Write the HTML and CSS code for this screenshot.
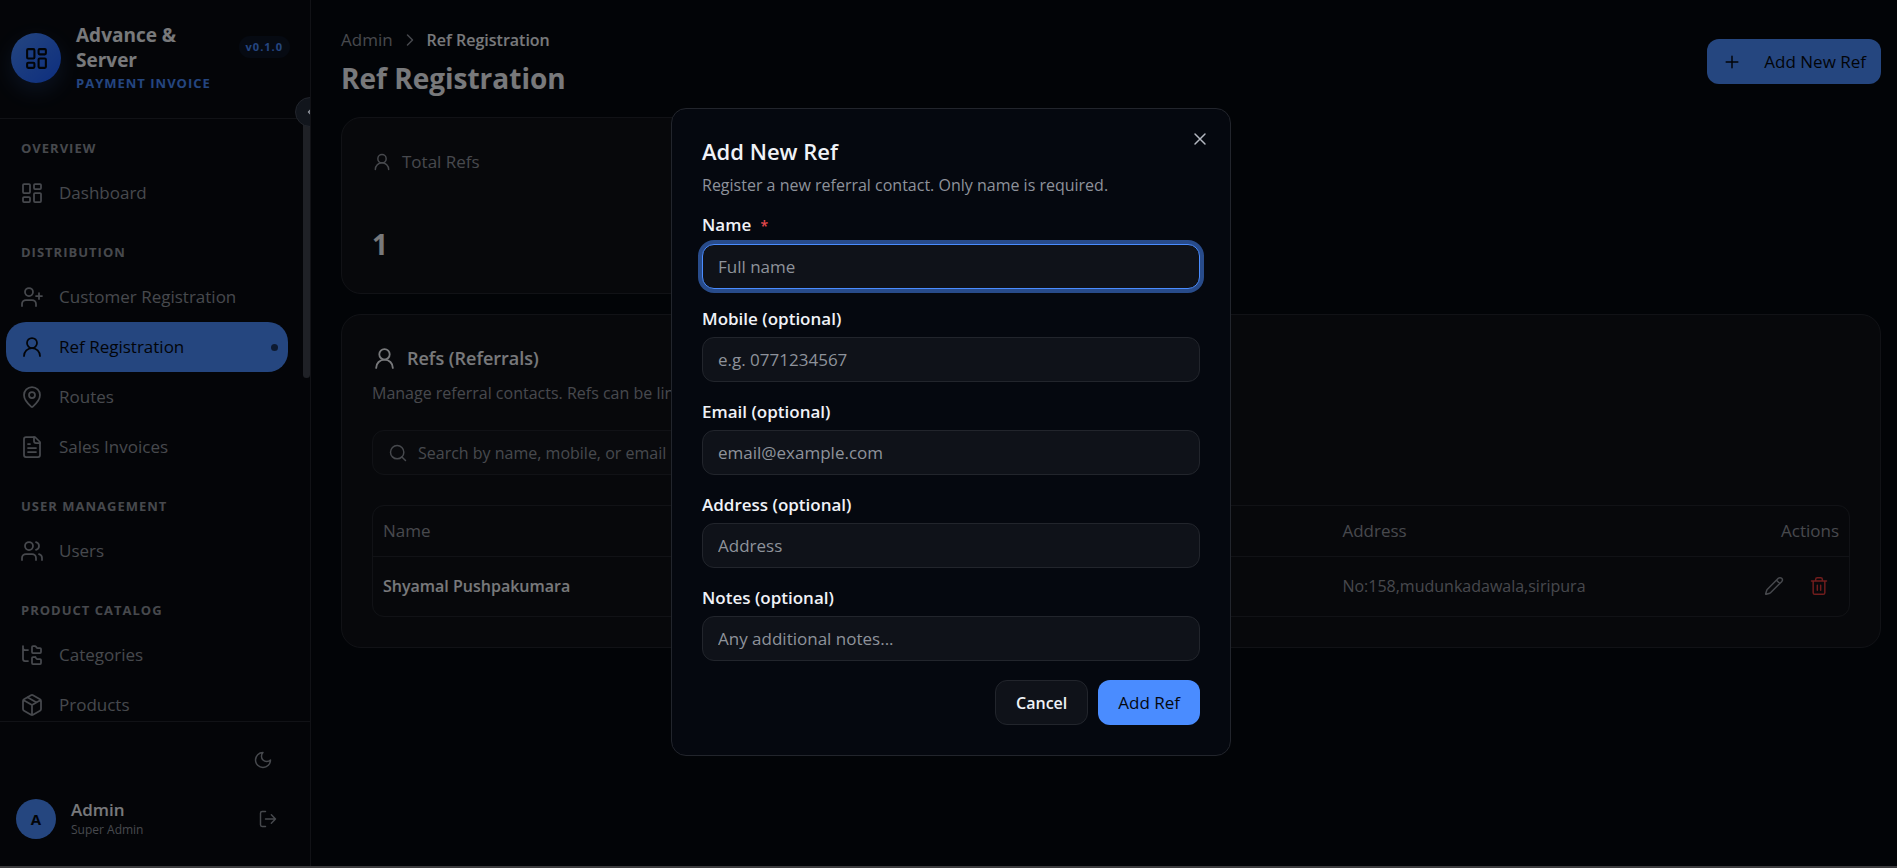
FILE: index.html
```html
<!DOCTYPE html>
<html lang="en">
<head>
<meta charset="utf-8">
<title>Ref Registration</title>
<link rel="stylesheet" href="styles.css">
</head>
<body>
<svg class="sprite" aria-hidden="true">
  <symbol id="i-dash" viewBox="0 0 24 24"><rect x="3" y="3" width="7" height="9" rx="1"/><rect x="14" y="3" width="7" height="5" rx="1"/><rect x="14" y="12" width="7" height="9" rx="1"/><rect x="3" y="16" width="7" height="5" rx="1"/></symbol>
  <symbol id="i-userplus" viewBox="0 0 24 24"><path d="M16 21v-2a4 4 0 0 0-4-4H6a4 4 0 0 0-4 4v2"/><circle cx="9" cy="7" r="4"/><path d="M19 8v6M22 11h-6"/></symbol>
  <symbol id="i-user" viewBox="0 0 24 24"><circle cx="12" cy="8" r="5"/><path d="M20 21a8 8 0 0 0-16 0"/></symbol>
  <symbol id="i-pin" viewBox="0 0 24 24"><path d="M20 10c0 4.993-5.539 10.193-7.399 11.799a1 1 0 0 1-1.202 0C9.539 20.193 4 14.993 4 10a8 8 0 0 1 16 0"/><circle cx="12" cy="10" r="3"/></symbol>
  <symbol id="i-file" viewBox="0 0 24 24"><path d="M15 2H6a2 2 0 0 0-2 2v16a2 2 0 0 0 2 2h12a2 2 0 0 0 2-2V7Z"/><path d="M14 2v4a2 2 0 0 0 2 2h4M10 9H8M16 13H8M16 17H8"/></symbol>
  <symbol id="i-users" viewBox="0 0 24 24"><path d="M16 21v-2a4 4 0 0 0-4-4H6a4 4 0 0 0-4 4v2"/><circle cx="9" cy="7" r="4"/><path d="M22 21v-2a4 4 0 0 0-3-3.870M16 3.130a4 4 0 0 1 0 7.750"/></symbol>
  <symbol id="i-tree" viewBox="0 0 24 24"><path d="M20 10a1 1 0 0 0 1-1V6a1 1 0 0 0-1-1h-2.500a1 1 0 0 1-.8-.4l-.9-1.200A1 1 0 0 0 15 3h-2a1 1 0 0 0-1 1v5a1 1 0 0 0 1 1Z"/><path d="M20 21a1 1 0 0 0 1-1v-3a1 1 0 0 0-1-1h-2.900a1 1 0 0 1-.88-.55l-.42-.85a1 1 0 0 0-.92-.6H13a1 1 0 0 0-1 1v5a1 1 0 0 0 1 1Z"/><path d="M3 5a2 2 0 0 0 2 2h3M3 3v13a2 2 0 0 0 2 2h3"/></symbol>
  <symbol id="i-box" viewBox="0 0 24 24"><path d="M11 21.730a2 2 0 0 0 2 0l7-4A2 2 0 0 0 21 16V8a2 2 0 0 0-1-1.730l-7-4a2 2 0 0 0-2 0l-7 4A2 2 0 0 0 3 8v8a2 2 0 0 0 1 1.730zM12 22V12M3.300 7l8.700 5 8.700-5M7.500 4.270l9 5.150"/></symbol>
  <symbol id="i-moon" viewBox="0 0 24 24"><path d="M12 3a6 6 0 0 0 9 9 9 9 0 1 1-9-9Z"/></symbol>
  <symbol id="i-out" viewBox="0 0 24 24"><path d="M9 21H5a2 2 0 0 1-2-2V5a2 2 0 0 1 2-2h4M16 17l5-5-5-5M21 12H9"/></symbol>
  <symbol id="i-right" viewBox="0 0 24 24"><path d="m9 18 6-6-6-6"/></symbol>
  <symbol id="i-left" viewBox="0 0 24 24"><path d="m15 18-6-6 6-6"/></symbol>
  <symbol id="i-plus" viewBox="0 0 24 24"><path d="M5 12h14M12 5v14"/></symbol>
  <symbol id="i-x" viewBox="0 0 24 24"><path d="M18 6 6 18M6 6l12 12"/></symbol>
  <symbol id="i-search" viewBox="0 0 24 24"><circle cx="11" cy="11" r="8"/><path d="m21 21-4.300-4.300"/></symbol>
  <symbol id="i-pen" viewBox="0 0 24 24"><path d="M21.174 6.812a1 1 0 0 0-3.986-3.987L3.842 16.174a2 2 0 0 0-.5.830l-1.321 4.352a.5.5 0 0 0 .623.622l4.353-1.320a2 2 0 0 0 .830-.497zM15 5l4 4"/></symbol>
  <symbol id="i-trash" viewBox="0 0 24 24"><path d="M3 6h18M19 6v14a2 2 0 0 1-2 2H7a2 2 0 0 1-2-2V6M8 6V4a2 2 0 0 1 2-2h4a2 2 0 0 1 2 2v2M10 11v6M14 11v6"/></symbol>
</svg>

<div class="app">
  <aside class="sidebar">
    <header class="brand">
      <span class="logo"><svg class="icon"><use href="#i-dash"/></svg></span>
      <div class="brand-text">
        <strong class="brand-name">Advance &amp; Server</strong>
        <span class="brand-sub">PAYMENT INVOICE</span>
      </div>
      <span class="version">v0.1.0</span>
      <button class="collapse" aria-label="Collapse sidebar"><svg class="icon"><use href="#i-left"/></svg></button>
    </header>
    <nav class="nav">
      <span class="thumb"></span>
      <section class="group">
        <h2 class="group-title">OVERVIEW</h2>
        <a class="item" href="#"><svg class="icon"><use href="#i-dash"/></svg>Dashboard</a>
      </section>
      <section class="group">
        <h2 class="group-title">DISTRIBUTION</h2>
        <a class="item" href="#"><svg class="icon"><use href="#i-userplus"/></svg>Customer Registration</a>
        <a class="item active" href="#" aria-current="page"><svg class="icon"><use href="#i-user"/></svg>Ref Registration<span class="dot"></span></a>
        <a class="item" href="#"><svg class="icon"><use href="#i-pin"/></svg>Routes</a>
        <a class="item" href="#"><svg class="icon"><use href="#i-file"/></svg>Sales Invoices</a>
      </section>
      <section class="group">
        <h2 class="group-title">USER MANAGEMENT</h2>
        <a class="item" href="#"><svg class="icon"><use href="#i-users"/></svg>Users</a>
      </section>
      <section class="group">
        <h2 class="group-title">PRODUCT CATALOG</h2>
        <a class="item" href="#"><svg class="icon"><use href="#i-tree"/></svg>Categories</a>
        <a class="item" href="#"><svg class="icon"><use href="#i-box"/></svg>Products</a>
      </section>
    </nav>
    <footer class="side-foot">
      <button class="ghost theme" aria-label="Dark theme"><svg class="icon"><use href="#i-moon"/></svg></button>
      <div class="account">
        <span class="avatar">A</span>
        <div class="who"><strong class="who-name">Admin</strong><span class="who-role">Super Admin</span></div>
        <button class="ghost" aria-label="Log out"><svg class="icon"><use href="#i-out"/></svg></button>
      </div>
    </footer>
  </aside>

  <main class="main">
    <header class="page-head">
      <div>
        <nav class="crumbs" aria-label="Breadcrumb"><a class="crumb" href="#">Admin</a><svg class="icon"><use href="#i-right"/></svg><span class="crumb-now">Ref Registration</span></nav>
        <h1 class="page-title">Ref Registration</h1>
      </div>
      <button class="btn primary add-new"><svg class="icon"><use href="#i-plus"/></svg>Add New Ref</button>
    </header>
    <div class="stats">
      <section class="card stat">
        <h2 class="stat-label"><svg class="icon"><use href="#i-user"/></svg>Total Refs</h2>
        <p class="stat-value">1</p>
      </section>
    </div>
    <section class="card list">
      <h2 class="list-title"><svg class="icon"><use href="#i-user"/></svg>Refs (Referrals)</h2>
      <p class="list-desc">Manage referral contacts. Refs can be linked to customers.</p>
      <label class="search"><svg class="icon"><use href="#i-search"/></svg><input class="search-input" type="search" aria-label="Search refs" placeholder="Search by name, mobile, or email"></label>
      <div class="table-wrap">
        <table class="table">
          <colgroup><col class="c-name"><col class="c-mid"><col class="c-addr"><col class="c-act"></colgroup>
          <thead><tr><th>Name</th><th></th><th>Address</th><th class="end">Actions</th></tr></thead>
          <tbody><tr>
            <td class="strong">Shyamal Pushpakumara</td><td></td><td>No:158,mudunkadawala,siripura</td>
            <td><div class="row-actions">
              <button class="ghost" aria-label="Edit"><svg class="icon"><use href="#i-pen"/></svg></button>
              <button class="ghost danger" aria-label="Delete"><svg class="icon"><use href="#i-trash"/></svg></button>
            </div></td>
          </tr></tbody>
        </table>
      </div>
    </section>
  </main>
</div>

<div class="overlay">
  <form class="modal" role="dialog" aria-labelledby="dlg-title">
    <button class="close" type="button" aria-label="Close"><svg class="icon"><use href="#i-x"/></svg></button>
    <h2 class="modal-title" id="dlg-title">Add New Ref</h2>
    <p class="modal-desc">Register a new referral contact. Only name is required.</p>
    <div class="fields">
      <div class="field"><label class="label" for="f-name">Name <span class="req">*</span></label><input class="input focused" id="f-name" type="text" placeholder="Full name"></div>
      <div class="field"><label class="label" for="f-mobile">Mobile (optional)</label><input class="input" id="f-mobile" type="tel" placeholder="e.g. 0771234567"></div>
      <div class="field"><label class="label" for="f-email">Email (optional)</label><input class="input" id="f-email" type="email" placeholder="email@example.com"></div>
      <div class="field"><label class="label" for="f-address">Address (optional)</label><input class="input" id="f-address" type="text" placeholder="Address"></div>
      <div class="field"><label class="label" for="f-notes">Notes (optional)</label><input class="input" id="f-notes" type="text" placeholder="Any additional notes..."></div>
    </div>
    <div class="modal-actions">
      <button class="btn outline" type="button">Cancel</button>
      <button class="btn primary" type="submit">Add Ref</button>
    </div>
  </form>
</div>
</body>
</html>
```
FILE: styles.css
```css
:root {
  --bg: #05080f;
  --side: #080b11;
  --card: #0f1117;
  --line: #22252c;
  --field: #0f1219;
  --text: #f0f2f7;
  --muted: #8e929b;
  --primary: #4a8cff;
  --ink: #05080f;
}

* { box-sizing: border-box; }

body {
  margin: 0;
  background: var(--bg);
  color: var(--text);
  font-family: "Open Sans", "Noto Sans", sans-serif;
  font-size: 17px;
  line-height: 24px;
}

h1, h2, p { margin: 0; font-size: inherit; font-weight: inherit; }
a { color: inherit; text-decoration: none; }
button, input { font: inherit; color: inherit; }
button { border: 0; padding: 0; background: none; cursor: pointer; }

.sprite { position: absolute; width: 0; height: 0; }

.icon {
  width: 20px;
  height: 20px;
  flex: none;
  fill: none;
  stroke: currentColor;
  stroke-width: 1.75;
  stroke-linecap: round;
  stroke-linejoin: round;
}

.app { display: flex; height: 100vh; }

/* Sidebar */
.sidebar {
  display: flex;
  flex-direction: column;
  flex: none;
  width: 311px;
  overflow: hidden;
  background: var(--side);
  border-right: 1px solid var(--line);
}

.brand {
  position: relative;
  display: flex;
  align-items: center;
  gap: 15px;
  height: 119px;
  padding: 0 20px 2px 11px;
  border-bottom: 1px solid var(--line);
}

.logo {
  display: grid;
  place-items: center;
  flex: none;
  width: 50px;
  height: 50px;
  border-radius: 50%;
  background: linear-gradient(135deg, #4a8cff, #1a5cff);
  color: var(--ink);
  box-shadow: 0 8px 20px rgba(74, 140, 255, 0.2);
}
.logo .icon { width: 25px; height: 25px; stroke-width: 2; }

.brand-text { display: flex; flex-direction: column; flex: 1; }
.brand-name { max-width: 120px; font-size: 19px; line-height: 25px; font-weight: 700; }
.brand-sub { color: var(--primary); font-size: 13px; line-height: 20px; font-weight: 700; letter-spacing: 1px; white-space: nowrap; }

.version {
  align-self: flex-start;
  margin-top: 36px;
  padding: 0 7px;
  border-radius: 11px;
  background: #0c1424;
  color: var(--primary);
  font-size: 11px;
  line-height: 22px;
  font-weight: 700;
  letter-spacing: 1px;
}

.collapse {
  position: absolute;
  right: -15px;
  bottom: -9px;
  display: grid;
  place-items: center;
  z-index: 1;
  width: 30px;
  height: 30px;
  border: 1px solid var(--line);
  border-radius: 50%;
  background: #11151c;
  color: var(--muted);
}
.collapse .icon { width: 12px; height: 12px; stroke-width: 3; }

.nav {
  position: relative;
  display: flex;
  flex-direction: column;
  gap: 24px;
  flex: 1;
  min-height: 0;
  overflow: hidden;
  padding: 19px 22px 0 6px;
}

.thumb {
  position: absolute;
  top: 0;
  right: 0;
  width: 7px;
  height: 43%;
  border-radius: 0 0 4px 4px;
  background: #3e424c;
}

.group-title {
  margin-bottom: 10px;
  padding-left: 15px;
  color: var(--muted);
  font-size: 13px;
  line-height: 20px;
  font-weight: 700;
  letter-spacing: 1px;
}

.item {
  display: flex;
  align-items: center;
  gap: 15px;
  height: 50px;
  padding: 0 10px 0 14px;
  border-radius: 20px;
  color: var(--muted);
  font-weight: 500;
}
.item .icon { width: 24px; height: 24px; }
.item.active { background: var(--primary); color: var(--ink); }
.dot { width: 7px; height: 7px; margin-left: auto; border-radius: 50%; background: #1b3563; }

.side-foot {
  display: flex;
  flex-direction: column;
  gap: 18px;
  height: 147px;
  padding: 18px 14px 0 16px;
  border-top: 1px solid var(--line);
}

.ghost {
  display: grid;
  place-items: center;
  width: 40px;
  height: 40px;
  border-radius: 12px;
  color: var(--muted);
}
.theme { align-self: flex-end; margin-right: 13px; }
.account { display: flex; align-items: center; gap: 15px; padding-right: 8px; }
.avatar {
  display: grid;
  place-items: center;
  width: 40px;
  height: 40px;
  border-radius: 50%;
  background: var(--primary);
  color: var(--ink);
  font-size: 15px;
  font-weight: 700;
}
.who { display: flex; flex-direction: column; flex: 1; }
.who-name { font-weight: 600; line-height: 23px; }
.who-role { color: var(--muted); font-size: 12px; line-height: 18px; }

/* Page */
.main {
  display: flex;
  flex-direction: column;
  gap: 20px;
  flex: 1;
  min-width: 0;
  padding: 28px 16px 0 30px;
}

.page-head { display: flex; justify-content: space-between; align-items: flex-start; height: 69px; }
.crumbs { display: flex; align-items: center; gap: 7px; color: var(--muted); }
.crumb-now { color: var(--text); font-size: 16px; font-weight: 600; }
.page-title { margin-top: 7px; font-size: 28px; line-height: 38px; font-weight: 700; }

.btn { height: 45px; padding: 0 20px; border-radius: 12px; font-weight: 500; white-space: nowrap; }
.primary { background: var(--primary); color: var(--ink); }
.outline { border: 1px solid var(--line); background: var(--field); font-size: 16px; font-weight: 600; }
.add-new { display: flex; align-items: center; gap: 22px; margin-top: 11px; padding: 0 15px; }

.card { border: 1px solid var(--line); border-radius: 20px; background: var(--card); }

.stats { display: grid; grid-template-columns: repeat(3, 1fr); gap: 20px; }
.stat { display: flex; flex-direction: column; gap: 50px; height: 177px; padding: 32px 30px; }
.stat-label { display: flex; align-items: center; gap: 10px; color: var(--muted); font-weight: 500; }
.stat-value { font-size: 28px; line-height: 40px; font-weight: 700; }

.list { padding: 30px; }
.list-title { display: flex; align-items: center; gap: 10px; font-size: 18px; line-height: 26px; font-weight: 600; }
.list-title .icon { width: 25px; height: 25px; }
.list-desc { margin-top: 10px; color: var(--muted); font-size: 16px; }

.search {
  display: flex;
  align-items: center;
  gap: 10px;
  width: 480px;
  height: 45px;
  margin-top: 25px;
  padding: 0 15px;
  border: 1px solid var(--line);
  border-radius: 12px;
  background: #12151b;
  color: var(--muted);
}
.search-input { flex: 1; min-width: 0; padding: 0; border: 0; outline: 0; background: none; font-size: 16px; }
::placeholder { color: var(--muted); opacity: 1; }

.table-wrap { margin-top: 30px; border: 1px solid var(--line); border-radius: 12px; overflow: hidden; }
.table { width: 100%; border-collapse: collapse; table-layout: fixed; }
.c-name { width: 25%; }
.c-addr { width: 24%; }
.c-act { width: 11%; }
.table th, .table td { padding: 0 10px; text-align: left; color: var(--muted); }
.table th { height: 50px; border-bottom: 1px solid var(--line); font-weight: 500; }
.table td { height: 60px; font-size: 16px; }
.table .strong { color: var(--text); font-weight: 600; }
.table .end { text-align: right; }
.row-actions { display: flex; justify-content: flex-end; gap: 5px; }
.table .danger { color: #e33a3a; }

/* Dialog */
.overlay {
  position: fixed;
  inset: 0;
  display: grid;
  place-items: center;
  padding: 0 0 2px 5px;
  border-bottom: 2px solid #3c3c3e;
  background: rgba(0, 0, 0, 0.5);
}

.modal {
  position: relative;
  width: 560px;
  padding: 30px;
  border: 1px solid var(--line);
  border-radius: 15px;
  background: var(--bg);
}

.close {
  position: absolute;
  top: 20px;
  right: 20px;
  display: grid;
  place-items: center;
  color: #b4b8c0;
}

.modal-title { font-size: 22px; line-height: 25px; font-weight: 600; }
.modal-desc { margin-top: 9px; color: var(--muted); font-size: 16px; }
.fields { display: flex; flex-direction: column; gap: 18px; margin-top: 16px; }
.field { display: flex; flex-direction: column; gap: 6px; }
.label { font-weight: 600; }
.req { margin-left: 5px; color: #e5484d; font-size: 14px; }
.input {
  width: 100%;
  height: 45px;
  padding: 0 15px;
  border: 1px solid var(--line);
  border-radius: 12px;
  outline: 0;
  background: var(--field);
}
.focused { border-color: var(--primary); box-shadow: 0 0 0 4px #284b8a; }
.modal-actions { display: flex; justify-content: flex-end; gap: 10px; margin-top: 19px; }
```
